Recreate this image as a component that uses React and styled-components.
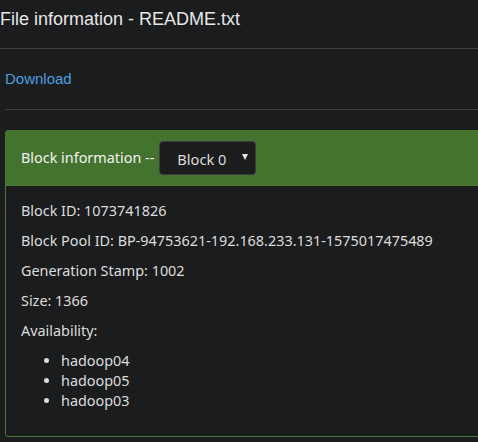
import React from "react";
import styled, { createGlobalStyle } from "styled-components";

const Global = createGlobalStyle`
  html, body {
    margin: 0;
    padding: 0;
    background: #1b1c1e;
    overflow: hidden;
  }
  body {
    font-family: "Noto Sans", "Liberation Sans", sans-serif;
    color: #dcdcdc;
  }
`;

const Page = styled.div`
  width: 520px;
`;

const TitleBar = styled.div`
  border-bottom: 1px solid #3c3d3f;
  padding: 7px 0 17px 0;
`;

const Title = styled.h1`
  margin: 0;
  font-family: "Liberation Sans", Arial, sans-serif;
  font-weight: normal;
  font-size: 18px;
  line-height: 24px;
  color: #e6e6e6;
`;

const Content = styled.div`
  padding-left: 5px;
`;

const LinkRow = styled.div`
  padding: 18px 0 20px 0;
  border-bottom: 1px solid #3c3d3f;
`;

const Link = styled.a`
  font-family: "Liberation Sans", Arial, sans-serif;
  font-size: 15px;
  line-height: 20px;
  color: #4d9fe0;
  text-decoration: none;
`;

const Panel = styled.div`
  margin-top: 20px;
  border: 1px solid #467a33;
  border-radius: 3px;
  background: #1b1c1e;
`;

const PanelHeading = styled.div`
  display: flex;
  align-items: center;
  background: #43732f;
  border-bottom: 1px solid #4a7d36;
  padding: 10px 15px;
`;

const HeadingText = styled.span`
  font-size: 14.4px;
  color: #f2f2f2;
  margin-right: 5px;
  margin-top: -2px;
`;

const Select = styled.div`
  display: flex;
  align-items: center;
  justify-content: space-between;
  box-sizing: border-box;
  width: 97px;
  height: 34px;
  padding: 1px 7px 0 17px;
  background: #1b1c1e;
  border: 1px solid #3a3b3d;
  border-radius: 4px;
  font-size: 14.6px;
  color: #dcdcdc;
`;

const Caret = styled.span`
  width: 0;
  height: 0;
  border-left: 3.5px solid transparent;
  border-right: 3.5px solid transparent;
  border-top: 6px solid #e6e6e6;
  margin-top: -3px;
`;

const PanelBody = styled.div`
  padding: 15px;
`;

const Line = styled.p`
  margin: 0 0 10px 0;
  font-size: 14.4px;
  line-height: 20px;
`;

const List = styled.ul`
  margin: 0 0 10px 0;
  padding-left: 40px;
`;

const Item = styled.li`
  font-size: 14.4px;
  line-height: 20px;
`;

export default function App() {
  return (
    <Page>
      <Global />
      <TitleBar>
        <Title>File information - README.txt</Title>
      </TitleBar>
      <Content>
        <LinkRow>
          <Link href="#">Download</Link>
        </LinkRow>
        <Panel>
          <PanelHeading>
            <HeadingText>Block information --</HeadingText>
            <Select>
              <span>Block 0</span>
              <Caret />
            </Select>
          </PanelHeading>
          <PanelBody>
            <Line>Block ID: 1073741826</Line>
            <Line>Block Pool ID: BP-94753621-192.168.233.131-1575017475489</Line>
            <Line>Generation Stamp: 1002</Line>
            <Line>Size: 1366</Line>
            <Line>Availability:</Line>
            <List>
              <Item>hadoop04</Item>
              <Item>hadoop05</Item>
              <Item>hadoop03</Item>
            </List>
          </PanelBody>
        </Panel>
      </Content>
    </Page>
  );
}
